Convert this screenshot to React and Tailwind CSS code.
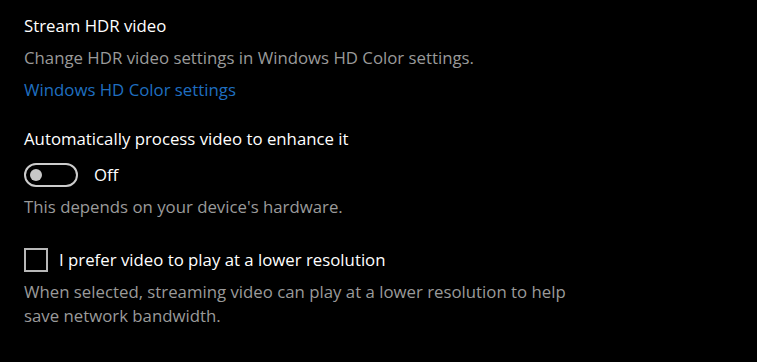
export default function App() {
  return (
    <div
      className="min-h-[362px] w-full bg-black pl-6 pt-[14px] text-[16.8px] leading-[24px] text-white"
      style={{ fontFamily: '"Open Sans", "Noto Sans", sans-serif' }}
    >
      <div>Stream HDR video</div>
      <div className="mt-[8px] text-[#9a9a9a]">
        Change HDR video settings in Windows HD Color settings.
      </div>
      <a href="#" className="mt-[8px] block w-fit text-[#1f6fc0]">
        Windows HD Color settings
      </a>

      <div className="mt-[25px]">Automatically process video to enhance it</div>
      <div className="mt-[12px] flex items-center gap-[16px]">
        <button
          type="button"
          className="flex h-[24px] w-[54px] items-center rounded-full border-2 border-[#cccccc] pl-[4px]"
          aria-label="Automatically process video"
        >
          <span className="h-[12px] w-[12px] rounded-full bg-[#c8c8c8]" />
        </button>
        <span>Off</span>
      </div>
      <div className="mt-[8px] text-[#9a9a9a]">This depends on your device's hardware.</div>

      <label className="mt-[29px] flex items-center gap-[11px]">
        <span className="h-[24px] w-[24px] border-2 border-[#b8b8b8]" />
        <span>I prefer video to play at a lower resolution</span>
      </label>
      <div className="mt-[8px] max-w-[565px] text-[#9a9a9a]">
        When selected, streaming video can play at a lower resolution to help save network bandwidth.
      </div>
    </div>
  );
}
